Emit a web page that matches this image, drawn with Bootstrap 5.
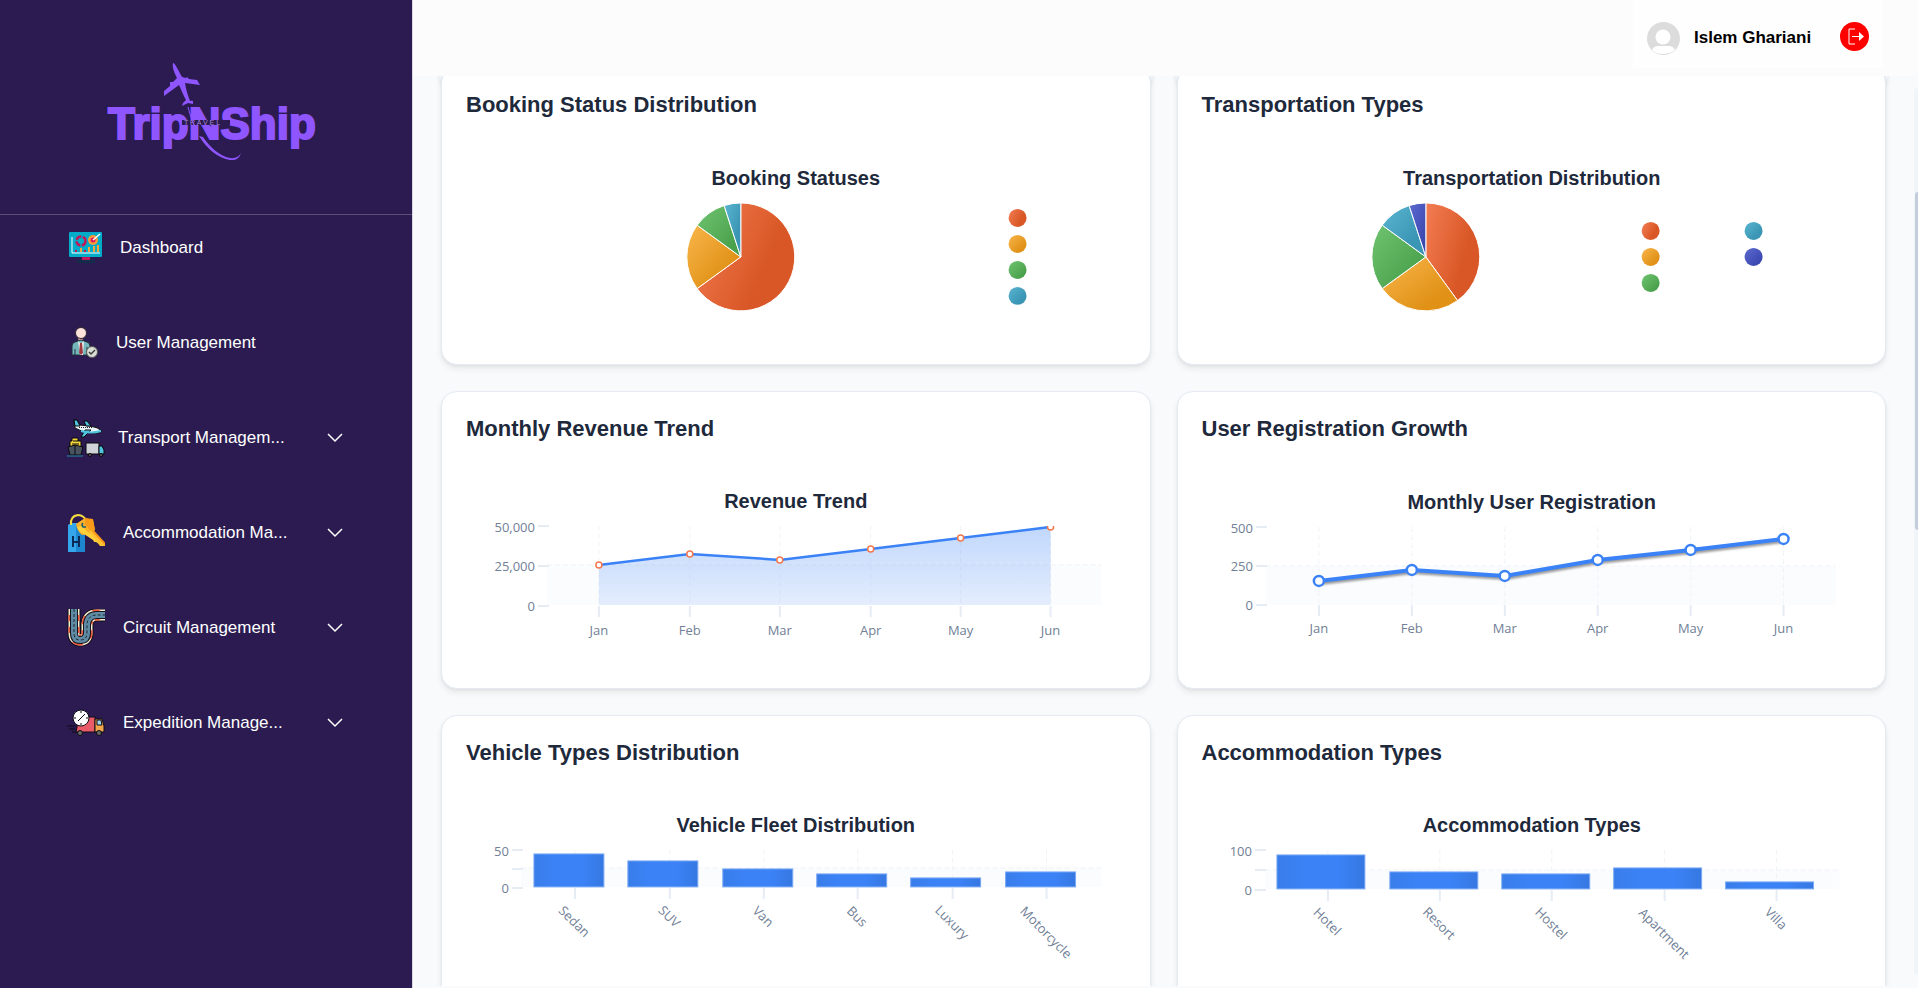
<!DOCTYPE html>
<html lang="en">
<head>
<meta charset="utf-8">
<meta name="viewport" content="width=device-width, initial-scale=1">
<title>TripNShip Dashboard</title>
<link rel="stylesheet" href="https://cdn.jsdelivr.net/npm/bootstrap@5.3.0/dist/css/bootstrap.min.css">
<style>
  body { font-family: "Liberation Sans", Arial, sans-serif; background: #f8fafc; color: #1e293b; }
  .sidebar { width: 413px; background: #2b1b50; border-right: 1px solid #d9d7e2; }
  .brand { height: 215px; padding-top: 60px; padding-left: 14px; border-bottom: 1px solid #5b4e78; }
  .brand-name { font-weight: 700; font-size: 44px; }
  .brand-tag { font-size: 7px; }
  .menu { gap: 31px; padding-left: 67px; padding-right: 69px; padding-top: 1px; }
  .menu-item { height: 64px; font-size: 17px; color: #fff; background: none; border: 0; padding: 0; text-decoration: none; text-align: left; }
  .menu-icon { width: 38px; margin-right: 18px; display: flex; justify-content: flex-end; }
  .menu-icon.mid { width: 35px; }
  .menu-icon.slim { width: 31px; }
  .menu-icon.tight { margin-right: 13px; }
  .menu-icon svg { flex: none; }
  .topbar { height: 76px; background: #fcfcfc; z-index: 2; padding-right: 35px; }
  .account { height: 68px; background: #fefefe; padding: 8px 14px 0 14px; width: 250px; }
  .account-name { font-size: 17px; font-weight: 700; color: #000; margin-left: 14px; }
  .logout { width: 29px; height: 29px; background: #ff0000; border: 0; padding: 0; margin-bottom: 3px; }
  .viewport-area { margin-bottom: 2px; }
  .charts { display: grid; grid-template-columns: repeat(2, minmax(0, 1fr)); gap: 26px; margin-top: -9px; padding: 0 32px 0 28px; }
  .chart-card { position: relative; background: #fff; border: 1px solid #e6ebf3; border-radius: 16px; padding: 24px; box-shadow: 0 4px 6px rgba(0,0,0,.07), 0 1px 3px rgba(0,0,0,.05); }
  /* lower edge of the scrolled-away row, showing behind the first cards */
  .chart-card.first-row::before { content: ""; position: absolute; z-index: -1; left: -3px; right: -3px; top: -40px; height: 62px; border-radius: 16px; background: #f1f4f8; box-shadow: 0 2px 4px rgba(0,0,0,.09); }
  .chart-card h2 { font-size: 22px; line-height: 26px; font-weight: 700; margin: 0 0 16px; }
  .chart-card svg { display: block; width: 100%; height: 206px; }
  .chart-title { font: 700 20px "Liberation Sans", Arial, sans-serif; fill: #1e293b; text-anchor: middle; }
  .axis { font: 13px "Open Sans", "Noto Sans", sans-serif; fill: #718096; text-anchor: middle; }
  .axis-y { text-anchor: end; }
  .tick { stroke: #e6ecf4; stroke-width: 2; fill: none; }
  .dash { stroke: #f1f3f7; stroke-width: 1; stroke-dasharray: 5 3; fill: none; }
  .band { fill: #fbfcfe; }
  .slices path { stroke: #fff; stroke-width: 1; }
  .bars rect { fill: url(#gBar); stroke: #7aa9f5; stroke-width: 1; }
  .scroll-track { width: 4px; top: 88px; bottom: 13px; right: 0; background: #f1f5f9; border-radius: 4px 0 0 4px; z-index: 3; }
  .scroll-thumb { width: 3px; height: 338px; margin: 104px 0 0 1px; background: #c3cddb; border-radius: 4px 0 0 4px; }
</style>
</head>
<body class="vh-100 overflow-hidden d-flex">

<aside class="sidebar flex-shrink-0 d-flex flex-column">
  <div class="brand d-flex justify-content-center align-items-start">
    <svg width="220" height="110" viewBox="0 0 220 110" role="img" aria-label="TripNShip Travel">
      <text class="brand-name" x="5" y="79" fill="#8f55ff" stroke="#8f55ff" stroke-width="2">TripNShip</text>
      <path d="M79 60H127V65H79Z" fill="#2b1b50"/>
      <text class="brand-tag" x="81" y="65" fill="#a987d8">T R A V E L</text>
      <path d="M70 3C72 3 75 10 79 17L83 18 84 17 86 19 94 20 97 25 82 23C83 30 85 36 87 41 91 40 90 42 90 44L85 43 79 46 80 43 83 40C80 35 78 29 76 25L61 36 61 31 67 26 67 22 70 22 74 18C71 12 69 7 70 3Z" fill="#8f55ff"/>
      <path d="M85 47Q87 56 92 68" stroke="#8f55ff" stroke-width="1" fill="none"/>
      <path d="M96 76C104 89 115 98 127 100Q136 101 138 93Q135 99 127 98C116 96 107 87 100 77Z" fill="#8f55ff"/>
    </svg>
  </div>
  <nav class="menu d-flex flex-column" aria-label="Main">
    <a href="#" class="menu-item d-flex align-items-center">
      <span class="menu-icon mid">
        <svg width="33" height="32" viewBox="0 0 33 32"><rect width="33" height="25" rx="1" fill="#00acc8"/><path d="M3 5V21H31" fill="none" stroke="#fff"/><circle cx="12" cy="9" r="4.500" fill="none" stroke="#c2185b" stroke-width="2.500" stroke-dasharray="6 1.500"/><circle cx="24" cy="8" r="5" fill="#fb9a3c"/><circle cx="24" cy="8" r="2.500" fill="#d81b60"/><path d="M24 8L31 2" stroke="#fff" stroke-width="1.500"/><path d="M11 16h2v4h-2zM19 15h2v5h-2zM24 14h2v6h-2zM28 13h2v7h-2z" fill="#f5a63c"/><path d="M6 18h2v2H6zM15 18h2v2h-2z" fill="#c2185b"/><path d="M13 25h8v4h-8z" fill="#c2185b"/><rect x="8" y="28" width="18" height="3" rx="1" fill="#122c4a"/></svg>
      </span>
      <span>Dashboard</span>
    </a>
    <a href="#" class="menu-item d-flex align-items-center">
      <span class="menu-icon slim">
        <svg width="27" height="32" viewBox="0 0 27 32"><path d="M7 10h5v6H7z" fill="#d8aa9f" stroke="#24303a" stroke-width=".8"/><circle cx="10" cy="6" r="5.500" fill="#fde3dc" stroke="#33272e"/><path d="M1 28V19Q1 16 4 15L10 13 16 15Q19 16 19 19V28Z" fill="#73b7bc" stroke="#24303a"/><path d="M7 14L10 17 13 14 12 28H9Z" fill="#f5eeee"/><path d="M9 16h2l1 10-2 2-2-2z" fill="#a03a40"/><path d="M4 22v6M16 20v8" stroke="#24303a"/><circle cx="21" cy="25" r="5.500" fill="#d9ded9" stroke="#5a5950"/><path d="M18 25l2 2 4-4" fill="none" stroke="#3c3c37" stroke-width="1.500"/></svg>
      </span>
      <span>User Management</span>
    </a>
    <button type="button" class="menu-item d-flex align-items-center">
      <span class="menu-icon tight">
        <svg width="38" height="38" viewBox="0 0 38 38" stroke="#08080c"><path d="M7 1h3l3 5 10 1q8 1 12 5-3 3-11 2-10-1-16-5z" fill="#e8f4f8"/><path d="M7 1h3l3 6H8z" fill="#4fc5e0"/><path d="M17 2h3l4 5h-5zM18 11h6l-7 7h-3z" fill="#4fc5e0"/><path d="M14 12q10 3 20 0" stroke="#4fc5e0" stroke-width="2" fill="none"/><path d="M12 8.500h14" stroke="#222" stroke-dasharray="1 1"/><path d="M3 28v-6h2v-3h6v3h3v6z" fill="#f6d93d"/><path d="M6 22h5M5 25h7"/><path d="M1 28l7-2 8 2-2 8H3z" fill="#4a5360"/><path d="M8 26v10"/><path d="M0 37h16" stroke="#2c8fb0"/><path d="M19 24h13v11H19z" fill="#d0d3d8"/><path d="M32 27h3l2 4v4h-5z" fill="#4fc5e0"/><circle cx="23" cy="36" r="1.500" fill="#666"/><circle cx="34" cy="36" r="1.500" fill="#666"/></svg>
      </span>
      <span>Transport Managem...</span>
      <svg class="ms-auto" width="16" height="16" viewBox="0 0 16 16" fill="none" stroke="#fff" stroke-width="1.500"><path d="M1 4L8 11 15 4"/></svg>
    </button>
    <button type="button" class="menu-item d-flex align-items-center">
      <span class="menu-icon">
        <svg width="38" height="38" viewBox="0 0 38 38"><path d="M1 11l3-2h10l4 3v26H1z" fill="#35a5ec"/><path d="M9 10h9v28H9z" fill="#1d86cf"/><path d="M6 22v11M12 22v11M6 28h6" stroke="#0b2b56" stroke-width="2"/><path d="M4 11Q3 2 11 1 17 1 20 8" fill="none" stroke="#f7dd3f" stroke-width="2"/><path d="M9 10L18 4 26 6 28 16 23 20 15 21Q10 17 9 10Z" fill="#fdb02b"/><path d="M18 4L26 5 28 16 24 18 18 10Z" fill="#f99b18"/><path d="M20 21L25 15 38 29V32H33L30 28 27 28 26 25Z" fill="#ffc233"/><path d="M25 16L38 30" stroke="#f9971b" stroke-width="2"/><path d="M10 13L16 12Q18 17 26 22L32 30 17 20Q12 18 10 13Z" fill="#ffd23c"/><path d="M16 9q-2 2 0 4h3" fill="none" stroke="#1b5c70" stroke-width="1.500"/></svg>
      </span>
      <span>Accommodation Ma...</span>
      <svg class="ms-auto" width="16" height="16" viewBox="0 0 16 16" fill="none" stroke="#fff" stroke-width="1.500"><path d="M1 4L8 11 15 4"/></svg>
    </button>
    <button type="button" class="menu-item d-flex align-items-center">
      <span class="menu-icon">
        <svg width="38" height="38" viewBox="0 0 38 38" fill="none"><path d="M7 0V24Q7 31 13 31 20 31 20 24V15Q21 6 30 6H38" stroke="#0c0c12" stroke-width="13"/><path d="M7 0V24Q7 31 13 31 20 31 20 24V15Q21 6 30 6H38" stroke="#f4ead2" stroke-width="11"/><path d="M7 0V24Q7 31 13 31 20 31 20 24V15Q21 6 30 6H38" stroke="#f0583c" stroke-width="11" stroke-dasharray="6 6" stroke-dashoffset="6"/><path d="M7 0V24Q7 31 13 31 20 31 20 24V15Q21 6 30 6H38" stroke="#14141c" stroke-width="8"/><path d="M7 0V24Q7 31 13 31 20 31 20 24V15Q21 6 30 6H38" stroke="#5f8ca4" stroke-width="6"/><path d="M7 0V24Q7 31 13 31 20 31 20 24V15Q21 6 30 6H38" stroke="#1a2833" stroke-dasharray="3 2"/></svg>
      </span>
      <span>Circuit Management</span>
      <svg class="ms-auto" width="16" height="16" viewBox="0 0 16 16" fill="none" stroke="#fff" stroke-width="1.500"><path d="M1 4L8 11 15 4"/></svg>
    </button>
    <button type="button" class="menu-item d-flex align-items-center">
      <span class="menu-icon">
        <svg width="38" height="28" viewBox="0 0 38 28" stroke="#0c0c12"><path d="M0 17h8M2 20h6M5 23h4"/><path d="M9 23L12 8H28V23Z" fill="#e95b68"/><path d="M28 10h7l2 7v6h-9z" fill="#f4a64a"/><path d="M30 11h4l1 5h-5z" fill="#9fd3ee"/><circle cx="14" cy="9" r="8" fill="#fff"/><path d="M11 12L18 5"/><path d="M14 2v2M14 14v2M7 9h2M19 9h2"/><circle cx="13" cy="24" r="2.500" fill="#666"/><circle cx="32" cy="24" r="2.500" fill="#666"/></svg>
      </span>
      <span>Expedition Manage...</span>
      <svg class="ms-auto" width="16" height="16" viewBox="0 0 16 16" fill="none" stroke="#fff" stroke-width="1.500"><path d="M1 4L8 11 15 4"/></svg>
    </button>
  </nav>
</aside>

<div class="flex-grow-1 d-flex flex-column overflow-hidden position-relative">
  <header class="topbar flex-shrink-0 d-flex justify-content-end align-items-start position-relative">
    <div class="account d-flex align-items-center">
      <svg width="33" height="33" viewBox="0 0 33 33" role="img" aria-label="Avatar"><circle cx="16.500" cy="16.500" r="16.500" fill="#dcdcdc"/><circle cx="16" cy="15" r="7.500" fill="#fff"/><path d="M5 28Q7 24 11 24H22Q26 24 28 28Q23 32 16 32 9 32 5 28Z" fill="#fff"/></svg>
      <span class="account-name">Islem Ghariani</span>
      <button type="button" class="logout rounded-circle d-flex ms-auto" aria-label="Log out">
        <svg width="29" height="29" viewBox="0 0 29 29" fill="none" stroke="#fff"><path d="M15 7H9V22H15M12 14.500H20"/><path d="M19 10L24 14.500 19 19Z" fill="#fff" stroke="none"/></svg>
      </button>
    </div>
  </header>

  <main class="viewport-area flex-grow-1 overflow-hidden">
    <div class="charts">
      <section class="chart-card first-row">
        <h2>Booking Status Distribution</h2>
        <svg viewBox="0 0 660 206" preserveAspectRatio="xMidYMin meet">
          <defs>
            <linearGradient id="gO" x2="1" y2=".5"><stop offset="0" stop-color="#f37d53"/><stop offset=".8" stop-color="#d95726"/></linearGradient>
            <linearGradient id="gY" x2="1" y2="1"><stop offset="0" stop-color="#f9b64b"/><stop offset=".75" stop-color="#e09116"/></linearGradient>
            <linearGradient id="gG" x2="1" y2="1"><stop offset="0" stop-color="#70c471"/><stop offset=".8" stop-color="#4aa14c"/></linearGradient>
            <linearGradient id="gC" x2="1" y2="1"><stop offset="0" stop-color="#5ab6d2"/><stop offset=".7" stop-color="#3a96b4"/></linearGradient>
            <linearGradient id="gP" x2="1" y2="1"><stop offset="0" stop-color="#5c6ad0"/><stop offset=".8" stop-color="#3a48b0"/></linearGradient>
            <linearGradient id="gArea" x2="0" y2="1"><stop offset="0" stop-color="#3b82f6" stop-opacity=".32"/><stop offset="1" stop-color="#3b82f6" stop-opacity=".12"/></linearGradient>
            <linearGradient id="gBar"><stop offset="0" stop-color="#387de9"/><stop offset=".3" stop-color="#3b82f6"/><stop offset=".7" stop-color="#3b82f6"/><stop offset="1" stop-color="#3678e2"/></linearGradient>
          </defs>
          <text class="chart-title" x="330" y="51">Booking Statuses</text>
          <g class="slices" transform="translate(275 123)">
            <path fill="url(#gO)" d="M0 0V-54A54 54 0 1 1 -43.690 31.740Z"/>
            <path fill="url(#gY)" d="M0 0L-43.690 31.740A54 54 0 0 1 -43.690 -31.740Z"/>
            <path fill="url(#gG)" d="M0 0L-43.690 -31.740A54 54 0 0 1 -16.690 -51.360Z"/>
            <path fill="url(#gC)" d="M0 0L-16.690 -51.360A54 54 0 0 1 0 -54Z"/>
          </g>
          <circle cx="552" cy="84" r="9" fill="url(#gO)"/><circle cx="552" cy="110" r="9" fill="url(#gY)"/><circle cx="552" cy="136" r="9" fill="url(#gG)"/><circle cx="552" cy="162" r="9" fill="url(#gC)"/>
        </svg>
      </section>

      <section class="chart-card first-row">
        <h2>Transportation Types</h2>
        <svg viewBox="0 0 660 206" preserveAspectRatio="xMidYMin meet">
          <text class="chart-title" x="330" y="51">Transportation Distribution</text>
          <g class="slices" transform="translate(224 123)">
            <path fill="url(#gO)" d="M0 0V-54A54 54 0 0 1 31.740 43.690Z"/>
            <path fill="url(#gY)" d="M0 0L31.740 43.690A54 54 0 0 1 -43.690 31.740Z"/>
            <path fill="url(#gG)" d="M0 0L-43.690 31.740A54 54 0 0 1 -43.690 -31.740Z"/>
            <path fill="url(#gC)" d="M0 0L-43.690 -31.740A54 54 0 0 1 -16.690 -51.360Z"/>
            <path fill="url(#gP)" d="M0 0L-16.690 -51.360A54 54 0 0 1 0 -54Z"/>
          </g>
          <circle cx="449" cy="97" r="9" fill="url(#gO)"/><circle cx="449" cy="123" r="9" fill="url(#gY)"/><circle cx="449" cy="149" r="9" fill="url(#gG)"/><circle cx="552" cy="97" r="9" fill="url(#gC)"/><circle cx="552" cy="123" r="9" fill="url(#gP)"/>
        </svg>
      </section>

      <section class="chart-card">
        <h2>Monthly Revenue Trend</h2>
        <svg viewBox="0 0 660 206" preserveAspectRatio="xMidYMin meet">
          <clipPath id="plot3"><path d="M81 68H636V148H81Z"/></clipPath>
          <text class="chart-title" x="330" y="50">Revenue Trend</text>
          <rect class="band" x="81" y="107" width="555" height="40"/>
          <path class="dash" d="M81 107H636M133 68V147M224 68V147M314 68V147M405 68V147M495 68V147M585 68V147"/>
          <path fill="url(#gArea)" d="M133 107L224 96 314 102 405 91 495 80 585 69V147H133Z"/>
          <path class="tick" d="M133 148V159M224 148V159M314 148V159M405 148V159M495 148V159M585 148V159"/>
          <path class="tick" d="M72 68H83M72 108H83M72 148H83"/>
          <g clip-path="url(#plot3)">
            <path d="M133 107L224 96 314 102 405 91 495 80 585 69" fill="none" stroke="#3b82f6" stroke-width="2.500"/>
            <g fill="#fff" stroke="#f4774f" stroke-width="1.500"><circle cx="133" cy="107" r="3"/><circle cx="224" cy="96" r="3"/><circle cx="314" cy="102" r="3"/><circle cx="405" cy="91" r="3"/><circle cx="495" cy="80" r="3"/><circle cx="585" cy="69" r="3"/></g>
          </g>
          <g class="axis axis-y"><text x="69" y="74">50,000</text><text x="69" y="113">25,000</text><text x="69" y="153">0</text></g>
          <g class="axis"><text x="133" y="177">Jan</text><text x="224" y="177">Feb</text><text x="314" y="177">Mar</text><text x="405" y="177">Apr</text><text x="495" y="177">May</text><text x="585" y="177">Jun</text></g>
        </svg>
      </section>

      <section class="chart-card">
        <h2>User Registration Growth</h2>
        <svg viewBox="0 0 660 206" preserveAspectRatio="xMidYMin meet">
          <text class="chart-title" x="330" y="51">Monthly User Registration</text>
          <rect class="band" x="64" y="108" width="570" height="39"/>
          <path class="dash" d="M64 108H634M117 69V147M210 69V147M303 69V147M396 69V147M489 69V147M582 69V147"/>
          <path class="tick" d="M117 147V158M210 147V158M303 147V158M396 147V158M489 147V158M582 147V158"/>
          <path class="tick" d="M54 69H65M54 108H65M54 147H65"/>
          <path d="M117 123L210 112 303 118 396 102 489 92 582 81" fill="none" stroke="#3b82f6" stroke-width="4" style="filter:drop-shadow(1px 2px 1px rgba(0,0,0,.4))"/>
          <g fill="#fff" stroke="#3b82f6" stroke-width="2.500"><circle cx="117" cy="123" r="5"/><circle cx="210" cy="112" r="5"/><circle cx="303" cy="118" r="5"/><circle cx="396" cy="102" r="5"/><circle cx="489" cy="92" r="5"/><circle cx="582" cy="81" r="5"/></g>
          <g class="axis axis-y"><text x="51" y="75">500</text><text x="51" y="113">250</text><text x="51" y="152">0</text></g>
          <g class="axis"><text x="117" y="175">Jan</text><text x="210" y="175">Feb</text><text x="303" y="175">Mar</text><text x="396" y="175">Apr</text><text x="489" y="175">May</text><text x="582" y="175">Jun</text></g>
        </svg>
      </section>

      <section class="chart-card">
        <h2>Vehicle Types Distribution</h2>
        <svg viewBox="0 0 660 206" preserveAspectRatio="xMidYMin meet">
          <text class="chart-title" x="330" y="50">Vehicle Fleet Distribution</text>
          <rect class="band" x="55" y="86" width="581" height="19"/>
          <path class="dash" d="M55 86H636M109 68V105M204 68V105M298 68V105M392 68V105M487 68V105M581 68V105"/>
          <path class="tick" d="M109 106V117M204 106V117M298 106V117M392 106V117M487 106V117M581 106V117"/>
          <path class="tick" d="M46 68H57M46 87H57M46 106H57"/>
          <g class="bars"><rect x="68" y="72" width="70" height="33"/><rect x="162" y="79" width="70" height="26"/><rect x="257" y="87" width="70" height="18"/><rect x="351" y="92" width="70" height="13"/><rect x="445" y="96" width="70" height="9"/><rect x="540" y="90" width="70" height="15"/></g>
          <g class="axis axis-y"><text x="43" y="74">50</text><text x="43" y="111">0</text></g>
          <g class="axis">
            <text transform="translate(108 140) rotate(45)" dy="4">Sedan</text>
            <text transform="translate(203 135) rotate(45)" dy="4">SUV</text>
            <text transform="translate(297 135) rotate(45)" dy="4">Van</text>
            <text transform="translate(391 135) rotate(45)" dy="4">Bus</text>
            <text transform="translate(486 141) rotate(45)" dy="4">Luxury</text>
            <text transform="translate(580 151) rotate(45)" dy="4">Motorcycle</text>
          </g>
        </svg>
      </section>

      <section class="chart-card">
        <h2>Accommodation Types</h2>
        <svg viewBox="0 0 660 206" preserveAspectRatio="xMidYMin meet">
          <text class="chart-title" x="330" y="50">Accommodation Types</text>
          <rect class="band" x="63" y="88" width="575" height="19"/>
          <path class="dash" d="M63 88H638M126 68V107M238 68V107M350 68V107M463 68V107M575 68V107"/>
          <path class="tick" d="M126 108V119M238 108V119M350 108V119M463 108V119M575 108V119"/>
          <path class="tick" d="M53 68H64M53 88H64M53 108H64"/>
          <g class="bars"><rect x="75" y="73" width="88" height="34"/><rect x="188" y="90" width="88" height="17"/><rect x="300" y="92" width="88" height="15"/><rect x="412" y="86" width="88" height="21"/><rect x="524" y="100" width="88" height="7"/></g>
          <g class="axis axis-y"><text x="50" y="74">100</text><text x="50" y="113">0</text></g>
          <g class="axis">
            <text transform="translate(125 140) rotate(45)" dy="4">Hotel</text>
            <text transform="translate(237 142) rotate(45)" dy="4">Resort</text>
            <text transform="translate(349 142) rotate(45)" dy="4">Hostel</text>
            <text transform="translate(462 152) rotate(45)" dy="4">Apartment</text>
            <text transform="translate(574 137) rotate(45)" dy="4">Villa</text>
          </g>
        </svg>
      </section>
    </div>
  </main>
  <div class="scroll-track position-absolute" aria-hidden="true"><div class="scroll-thumb"></div></div>
</div>

<script src="https://cdn.jsdelivr.net/npm/bootstrap@5.3.0/dist/js/bootstrap.bundle.min.js"></script>
</body>
</html>
